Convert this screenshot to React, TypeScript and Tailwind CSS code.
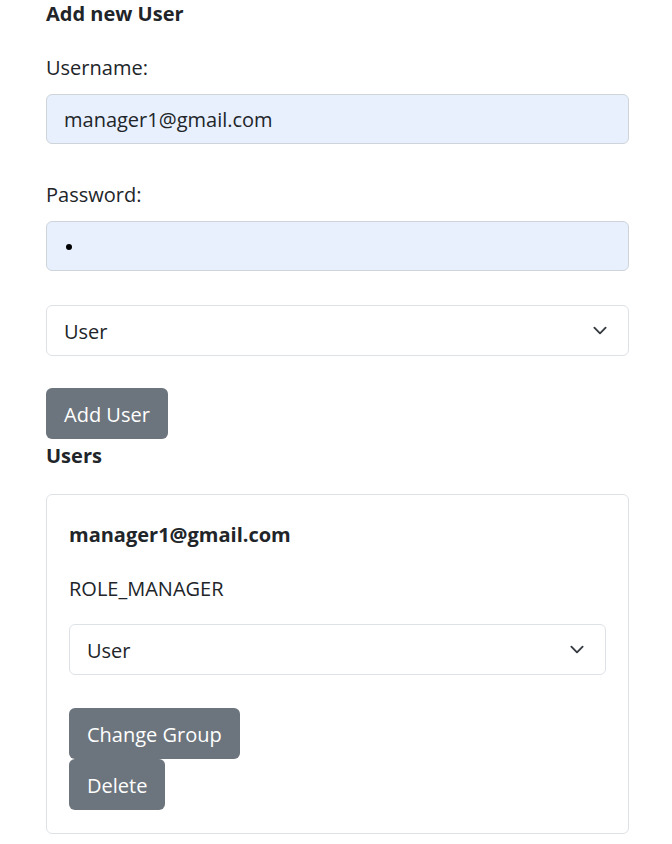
import React from "react";

const Chevron = () => (
  <svg width="20" height="15" viewBox="0 0 16 16" className="shrink-0">
    <path d="m2 5 6 6 6-6" fill="none" stroke="#343a40" strokeWidth="2" strokeLinecap="round" strokeLinejoin="round" />
  </svg>
);

const Select = ({ className = "" }: { className?: string }) => (
  <div className={`flex items-center justify-between h-[51px] rounded-[6px] border border-[#dee2e6] bg-white pl-[17px] pr-[18px] ${className}`}>
    <span className="leading-[30px] pt-[2px]">User</span>
    <Chevron />
  </div>
);

const Btn = ({ children }: { children: React.ReactNode }) => (
  <div className="inline-flex items-center h-[51px] px-[18px] pt-[2px] rounded-[6px] bg-[#6c757d] text-white leading-[30px] self-start">
    {children}
  </div>
);

export default function App() {
  return (
    <div
      className="bg-white min-h-[844px] pl-[46px] pr-[43px] text-[20px] text-[#212529]"
      style={{ fontFamily: '"Open Sans", "Noto Sans", sans-serif' }}
    >
      <div className="flex flex-col">
        <div className="font-bold leading-[24px] mt-[2px]">Add new User</div>
        <label className="leading-[30px] mt-[27px]">Username:</label>
        <div className="mt-[11px] h-[50px] rounded-[6px] border border-[#ced4da] bg-[#e8f0fe] flex items-center pl-[17px] pt-[2px] leading-[30px]">
          manager1@gmail.com
        </div>
        <label className="leading-[30px] mt-[36px]">Password:</label>
        <div className="mt-[11px] h-[50px] rounded-[6px] border border-[#ced4da] bg-[#e8f0fe] flex items-center pl-[17px] pt-[2px]">
          <span className="w-[6px] h-[6px] rounded-full bg-black ml-[2px]" />
        </div>
        <Select className="mt-[34px]" />
        <div className="mt-[32px] flex">
          <Btn>Add User</Btn>
        </div>
        <div className="font-bold leading-[24px] mt-[5px]">Users</div>
        <div className="mt-[26px] rounded-[6px] border border-[#dee2e6] px-[22px] pt-[22px] pb-[23px] flex flex-col">
          <div className="font-bold leading-[24px] mt-[6px]">manager1@gmail.com</div>
          <div className="leading-[30px] mt-[27px]">ROLE_MANAGER</div>
          <Select className="mt-[20px]" />
          <div className="mt-[33px] flex flex-col">
            <Btn>Change Group</Btn>
            <Btn>Delete</Btn>
          </div>
        </div>
      </div>
    </div>
  );
}
